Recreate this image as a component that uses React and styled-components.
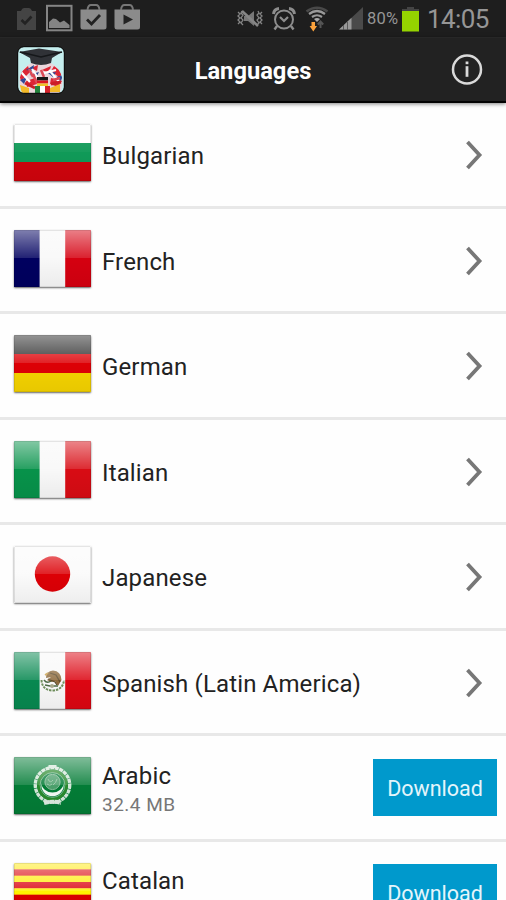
import React from 'react';
import styled, { createGlobalStyle } from 'styled-components';

const languages = [
  { name: 'Bulgarian', flag: 'bg', gloss: 'none' },
  { name: 'French', flag: 'fr' },
  { name: 'German', flag: 'de' },
  { name: 'Italian', flag: 'it' },
  { name: 'Japanese', flag: 'jp' },
  { name: 'Spanish (Latin America)', flag: 'mx' },
  { name: 'Arabic', flag: 'ar', size: '32.4 MB', download: true },
  { name: 'Catalan', flag: 'ca', download: true },
];

const Horizontal = ({ colors }) => {
  const h = 57 / colors.length;
  return colors.map((color, i) => (
    <rect key={i} x="0" y={i * h} width="77" height={h + 0.3} fill={color} />
  ));
};

const Vertical = ({ colors }) => colors.map((color, i) => (
  <rect key={i} x={i * 25.6} y="0" width="26" height="57" fill={color} />
));

const MexicanArms = () => (
  <g fill="none">
    <path d="M27.5 28 Q28 38 38.5 38.5 Q49 38 50 28" stroke="#6f8f5c" strokeWidth="2" strokeDasharray="2.4 1" />
    <path d="M32 26 Q32 19 39 18.5 Q47 19 47.5 28 L44 34 L41 29 L37 30 L33 28 L37 25 Z" fill="#8d6a3c" />
    <path d="M36 21 L42 23 L46 30 M34 27 L41 30 L43 33" stroke="#5d4a2a" strokeWidth="1.3" />
    <path d="M30 28 Q33 32 37 29 M31 33 L36 34 L44 34" stroke="#4d6b46" strokeWidth="1.5" />
    <circle cx="38" cy="34" r="2" fill="#a9a98c" />
    <path d="M31 23 L34 21" stroke="#c8a04a" strokeWidth="1.6" />
  </g>
);

const ArabEmblem = () => (
  <g fill="none">
    <circle cx="38.5" cy="28" r="17.2" stroke="#d3e6d8" strokeWidth="3.4" strokeDasharray="4 .6" />
    <circle cx="38.5" cy="28" r="14" stroke="#2a8a2c" strokeWidth="2.8" />
    <circle cx="38.5" cy="28" r="12.4" stroke="#a6cfb1" strokeWidth=".7" />
    <path d="M27.5 26 A11.2 11.2 0 1 0 49.5 26 A11 9.6 0 0 1 27.5 26" fill="#f3f8f4" />
    <circle cx="38.5" cy="25" r="7.6" fill="#4b9f6b" stroke="#86bb98" strokeWidth="1" />
    <path d="M34 22 Q36 27 39 23 M39 28 Q42 26 43 22 M33 27 Q36 30 38 27" stroke="#8fc3a0" strokeWidth="1" />
    <path d="M30 46 Q38.5 43.500 47 46" stroke="#dcebe0" strokeWidth="4" strokeDasharray="5 .5" />
    <path d="M34.500 9.500 H42.500" stroke="#d3e6d8" strokeWidth="3" />
  </g>
);

const flagArt = {
  bg: <Horizontal colors={['#ffffff', '#109a58', '#d0040c']} />,
  fr: <Vertical colors={['#00005f', '#f8f8f8', '#d50010']} />,
  de: <Horizontal colors={['#2a2a2a', '#dd0006', '#f4d200']} />,
  it: <Vertical colors={['#07924a', '#f8f8f8', '#d80c14']} />,
  jp: (
    <>
      <rect width="77" height="57" fill="#fafafa" />
      <circle cx="38.5" cy="28" r="17.7" fill="#dc0006" />
    </>
  ),
  mx: (
    <>
      <Vertical colors={['#078850', '#f8f8f8', '#dc0612']} />
      <MexicanArms />
    </>
  ),
  ar: (
    <>
      <rect width="77" height="57" fill="#037c36" />
      <ArabEmblem />
    </>
  ),
  ca: <Horizontal colors={['#ffe914', '#dc0a12', '#ffec0a', '#dc0612', '#fff200', '#d90000', '#fbd800', '#d90000', '#f4cf00']} />,
};

const Flag = ({ code, gloss }) => (
  <FlagFrame>
    <svg width="77" height="57" viewBox="0 0 77 57">
      <defs>
        <linearGradient id={`gloss-${code}`} x1="0" y1="0" x2="0" y2="1">
          <stop offset="0" stopColor="#fff" stopOpacity={gloss === 'none' ? 0.12 : 0.5} />
          <stop offset="1" stopColor="#fff" stopOpacity={gloss === 'none' ? 0.03 : 0.13} />
        </linearGradient>
        <linearGradient id={`shade-${code}`} x1="0" y1="0" x2="0" y2="1">
          <stop offset="0.5" stopColor="#000" stopOpacity="0" />
          <stop offset="1" stopColor="#000" stopOpacity="0.05" />
        </linearGradient>
      </defs>
      {flagArt[code]}
      <rect width="77" height="28" fill={`url(#gloss-${code})`} />
      <rect width="77" height="57" fill={`url(#shade-${code})`} />
      <rect x=".5" y=".5" width="76" height="56" rx="1" fill="none" stroke="#000" strokeOpacity=".09" />
    </svg>
  </FlagFrame>
);

const MutedIcon = () => (
  <svg width="28" height="22" viewBox="0 0 28 22" fill="none" stroke="#858585" strokeWidth="1.7">
    <path d="M2 4 L4 6 L2 8 L4 10 L2 12 L4 14 L2 16 M6 3 L5 5 L7 7 L5 10 L7 12 L5 15 L7 17" strokeWidth="1.3" />
    <path d="M26 4 L24 6 L26 8 L24 10 L26 12 L24 14 L26 16 M22 3 L23 5 L21 7 L23 10 L21 12 L23 15 L21 17" strokeWidth="1.3" />
    <path d="M8 8 H12 L18 3 V18 L12 13 H8 Z" fill="#777" stroke="none" />
    <path d="M6 3 L22 18" strokeWidth="2.6" />
  </svg>
);

const AlarmIcon = () => (
  <svg width="26" height="26" viewBox="0 0 26 26" fill="none" stroke="#8e8e8e" strokeWidth="2">
    <circle cx="13" cy="13.5" r="9" />
    <path d="M9 11 L13 15 L17 11" strokeWidth="2.2" />
    <path d="M2.5 8 Q3 3 8 2.5 M23.5 8 Q23 3 18 2.5" strokeWidth="3" />
    <path d="M6 20 L3.5 23.5 M20 20 L22.5 23.5" strokeWidth="2.4" />
  </svg>
);

const WifiIcon = () => (
  <svg width="24" height="28" viewBox="0 0 24 28" fill="none">
    <path d="M1.5 6.5 Q12 -1 22.5 6.5" stroke="#494949" strokeWidth="2.6" />
    <path d="M4 9 Q12 3 20 9 M7 12 Q12 8.5 17 12" stroke="#999" strokeWidth="2.2" />
    <path d="M9 14 Q12 12 15 14 L12 17 Z" fill="#aaa" />
    <path d="M6.5 17 H10 V21 H12 L8.3 26.5 L4.6 21 H6.5 Z" fill="#fba23c" />
    <path d="M15.5 23 V17 M12.8 19.5 L15.5 16.5 L18.2 19.5" stroke="#555" strokeWidth="2" />
  </svg>
);

const SignalIcon = () => (
  <svg width="24" height="23" viewBox="0 0 24 23">
    <path d="M0 22.5 L24 0 V22.5 Z" fill="#4a4a4a" />
    <path d="M0 22.5 L12.5 10.8 V22.5 Z" fill="#999" />
    <path d="M4.5 18 V23 M8.5 15 V23" stroke="#4a4a4a" strokeWidth=".8" />
  </svg>
);

const BatteryIcon = () => (
  <svg width="17" height="26" viewBox="0 0 17 26">
    <path d="M5 1 H12 V3 H17 V5 H0 V3 H5 Z" fill="#444" />
    <rect y="5" width="17" height="20.5" fill="#95d300" />
  </svg>
);

const NoticeIcons = () => (
  <svg width="124" height="30" viewBox="0 0 124 30" fill="none">
    {/* faded update */}
    <path d="M1 7 H5 Q6 4 8 4 H13 Q15 4 16 7 H20 V26 H1 Z" fill="#444" />
    <path d="M5.5 16 L9 19.5 L15.5 12.5" stroke="#222" strokeWidth="2.6" />
    {/* gallery */}
    <rect x="31" y="1.8" width="24.5" height="24.5" stroke="#858585" strokeWidth="2" />
    <path d="M33 24 V18 L37 14.5 L40 15 L44 18.5 L48 16.5 L53.5 21 V24 Z" fill="#858585" />
    {/* store */}
    <path d="M64.5 5.5 H90.5 V23 Q90.5 25.5 88 25.5 H67 Q64.5 25.5 64.5 23 Z" fill="#8b8b8b" />
    <path d="M71.5 6 Q72 1 75 1 H80 Q83 1 83.5 6" stroke="#777" strokeWidth="2" />
    <path d="M71 15.5 L75.5 20 L84 11" stroke="#222" strokeWidth="2.8" />
    <path d="M98.5 5.5 H124 V23 Q124 25.5 121.5 25.5 H101 Q98.5 25.5 98.5 23 Z" fill="#8b8b8b" />
    <path d="M105 6 Q105.5 1 108.5 1 H113.5 Q116.5 1 117 6" stroke="#777" strokeWidth="2" />
    <path d="M107.5 10.5 L117 15.5 L107.5 20.5 Z" fill="#222" />
  </svg>
);

const AppLogo = () => (
  <svg width="48" height="48" viewBox="0 0 48 48">
    <defs>
      <clipPath id="tile"><rect x="1" y="1" width="46" height="46" rx="6" /></clipPath>
      <clipPath id="globe"><circle cx="24" cy="36" r="21.5" /></clipPath>
    </defs>
    <g clipPath="url(#tile)">
      <rect width="48" height="48" fill="#c5eeee" />
      <g clipPath="url(#globe)">
        <rect width="48" height="48" y="10" fill="#ead6dc" />
        <path d="M2 28 L11 20 L13 26 L4 35 Z M14 22 L21 19 L20 25 Z M37 20 L45 26 L43 32 L34 25 Z M9 35 L18 32 L20 38 L10 41 Z M34 32 L45 35 L41 41 L33 38 Z M25 24 L34 20 L32 27 Z" fill="#dc2635" />
        <path d="M9 24 L17 19 L16 25 Z M31 27 L39 26 L36 31 Z M3 34 L10 31 L7 38 Z M12 29 L22 26 L20 30 Z M39 31 L46 29 L44 35 Z" fill="#304995" />
        <path d="M4 26 L13 36 M15 23 L23 35 M32 24 L43 37 M27 27 L39 24" stroke="#fff" strokeWidth="2.2" />
        <path d="M16 28 L20 37 M36 34 L43 32 M12 23 L16 31 M24 24 L27 31" stroke="#dc4956" strokeWidth="2.5" />
        <path d="M3 39 L12 42 V48 H4 Z M33 42 L43 38 V46 H32 Z" fill="#f2b928" />
        <path d="M8 37 L18 42 M34 38 L44 36" stroke="#ca1d27" strokeWidth="3" />
        <rect x="20" y="31" width="11" height="3.5" fill="#171717" />
        <rect x="20" y="34.5" width="11" height="3" fill="#dc1822" />
        <rect x="20" y="37.500" width="11" height="2.500" fill="#efc52b" />
        <rect x="18" y="40" width="5" height="8" fill="#24823d" />
        <rect x="23" y="40" width="5" height="8" fill="#fff" />
        <rect x="28" y="40" width="5" height="8" fill="#d6242c" />
      </g>
      <path d="M2 6 L22 2.5 L45 6 L35 12 L34 17 Q24 21 14 17 L13 12 Z" fill="#303237" />
      <path d="M3 6 L24 11 L45 6" fill="none" stroke="#15171a" strokeWidth="1.5" />
    </g>
    <rect x=".7" y=".7" width="46.6" height="46.6" rx="6" fill="none" stroke="#0c0c0c" strokeWidth="1" />
  </svg>
);

const InfoIcon = () => (
  <svg width="32" height="32" viewBox="0 0 32 32" fill="none" stroke="#dadada">
    <circle cx="16" cy="15.500" r="14" strokeWidth="2.5" />
    <path d="M16 12.2 V22.8" strokeWidth="2.8" />
    <path d="M16 7.500 V10.200" strokeWidth="2.8" />
  </svg>
);

const Chevron = () => (
  <svg width="18" height="32" viewBox="0 0 18 32" fill="none">
    <path d="M2.5 3 L14.5 16 L2.5 29" stroke="#777" strokeWidth="3.8" />
  </svg>
);

function App() {
  return (
    <Screen>
      <GlobalStyle />
      <StatusBar>
        <NoticeIcons />
        <StatusGroup>
          <MutedIcon />
          <AlarmIcon />
          <WifiIcon />
          <SignalIcon />
          <Percent>80%</Percent>
          <BatteryIcon />
          <Clock>14:05</Clock>
        </StatusGroup>
      </StatusBar>
      <Header>
        <AppLogo />
        <Title>Languages</Title>
        <InfoButton aria-label="Info"><InfoIcon /></InfoButton>
      </Header>
      <List>
        {languages.map(({ name, flag, size, gloss, download }) => (
          <Row key={name}>
            <Flag code={flag} gloss={gloss} />
            <Labels $raised={download && !size}>
              <Name>{name}</Name>
              {size && <Size>{size}</Size>}
            </Labels>
            {download ? <DownloadButton>Download</DownloadButton> : <ArrowCell><Chevron /></ArrowCell>}
          </Row>
        ))}
      </List>
    </Screen>
  );
}

const GlobalStyle = createGlobalStyle`
  * {
    box-sizing: border-box;
  }
  body {
    margin: 0;
    overflow: hidden;
    background: #fefefe;
    font-family: Roboto, sans-serif;
  }
  svg {
    display: block;
    flex-shrink: 0;
  }
`;

const Screen = styled.div`
  width: 506px;
  height: 900px;
  overflow: hidden;
  display: flex;
  flex-direction: column;
`;

const StatusBar = styled.div`
  height: 37px;
  flex-shrink: 0;
  display: flex;
  justify-content: space-between;
  align-items: center;
  padding: 0 17px 0 16px;
  background: #1e1e1e;
`;

const StatusGroup = styled.div`
  display: flex;
  align-items: center;
  color: #969696;

  svg:nth-of-type(2) {
    margin-left: 7px;
  }
  svg:nth-of-type(3) {
    margin-left: 8px;
  }
  svg:nth-of-type(4) {
    margin-left: 10px;
  }
`;

const Percent = styled.span`
  width: 34px;
  margin: 0 1px 0 4px;
  font-size: 16.5px;
  letter-spacing: 0.2px;
`;

const Clock = styled.span`
  width: 62px;
  margin-left: 8px;
  font-size: 26px;
  line-height: 36px;
  letter-spacing: -0.6px;
  white-space: nowrap;
`;

const Header = styled.header`
  height: 66px;
  flex-shrink: 0;
  display: grid;
  grid-template-columns: 48px 1fr 48px;
  align-items: center;
  padding: 0 17px;
  background: #222222;
  border-top: 1px solid #272727;
  border-bottom: 2px solid #030303;
  box-shadow: 0 1px 4px rgba(0, 0, 0, 0.5);
`;

const Title = styled.h1`
  margin: 2px 0 0;
  text-align: center;
  font-size: 23.7px;
  font-weight: 700;
  color: #ffffff;
`;

const InfoButton = styled.button`
  justify-self: end;
  margin: 0 6px 0 0;
  padding: 0;
  border: 0;
  background: none;
`;

const List = styled.ul`
  margin: 0;
  padding: 0;
  list-style: none;
`;

const Row = styled.li`
  height: 105.5px;
  display: flex;
  align-items: center;
  padding: 0 9px 0 14px;
  border-bottom: 3px solid #e8e8e8;
`;

const FlagFrame = styled.div`
  width: 77px;
  height: 57px;
  margin-bottom: 3px;
  border-radius: 1px;
  box-shadow: 0 1px 2px rgba(0, 0, 0, 0.6);
`;

const Labels = styled.div`
  flex: 1;
  margin-left: 11px;
  padding-top: 4px;
  padding-bottom: ${({ $raised }) => ($raised ? '27px' : '0')};
`;

const Name = styled.div`
  font-size: 24px;
  line-height: 28px;
  letter-spacing: 0.14px;
  color: #222222;
`;

const Size = styled.div`
  margin-top: 3px;
  font-size: 19px;
  line-height: 24px;
  letter-spacing: 0.5px;
  color: #777777;
`;

const ArrowCell = styled.div`
  margin: 2px 14px 0 0;
`;

const DownloadButton = styled.button`
  width: 124px;
  height: 57px;
  padding: 2px 0 0;
  border: 0;
  background: #0099cc;
  color: #e4f5fb;
  font-family: inherit;
  font-size: 21.5px;
`;

export default App;
